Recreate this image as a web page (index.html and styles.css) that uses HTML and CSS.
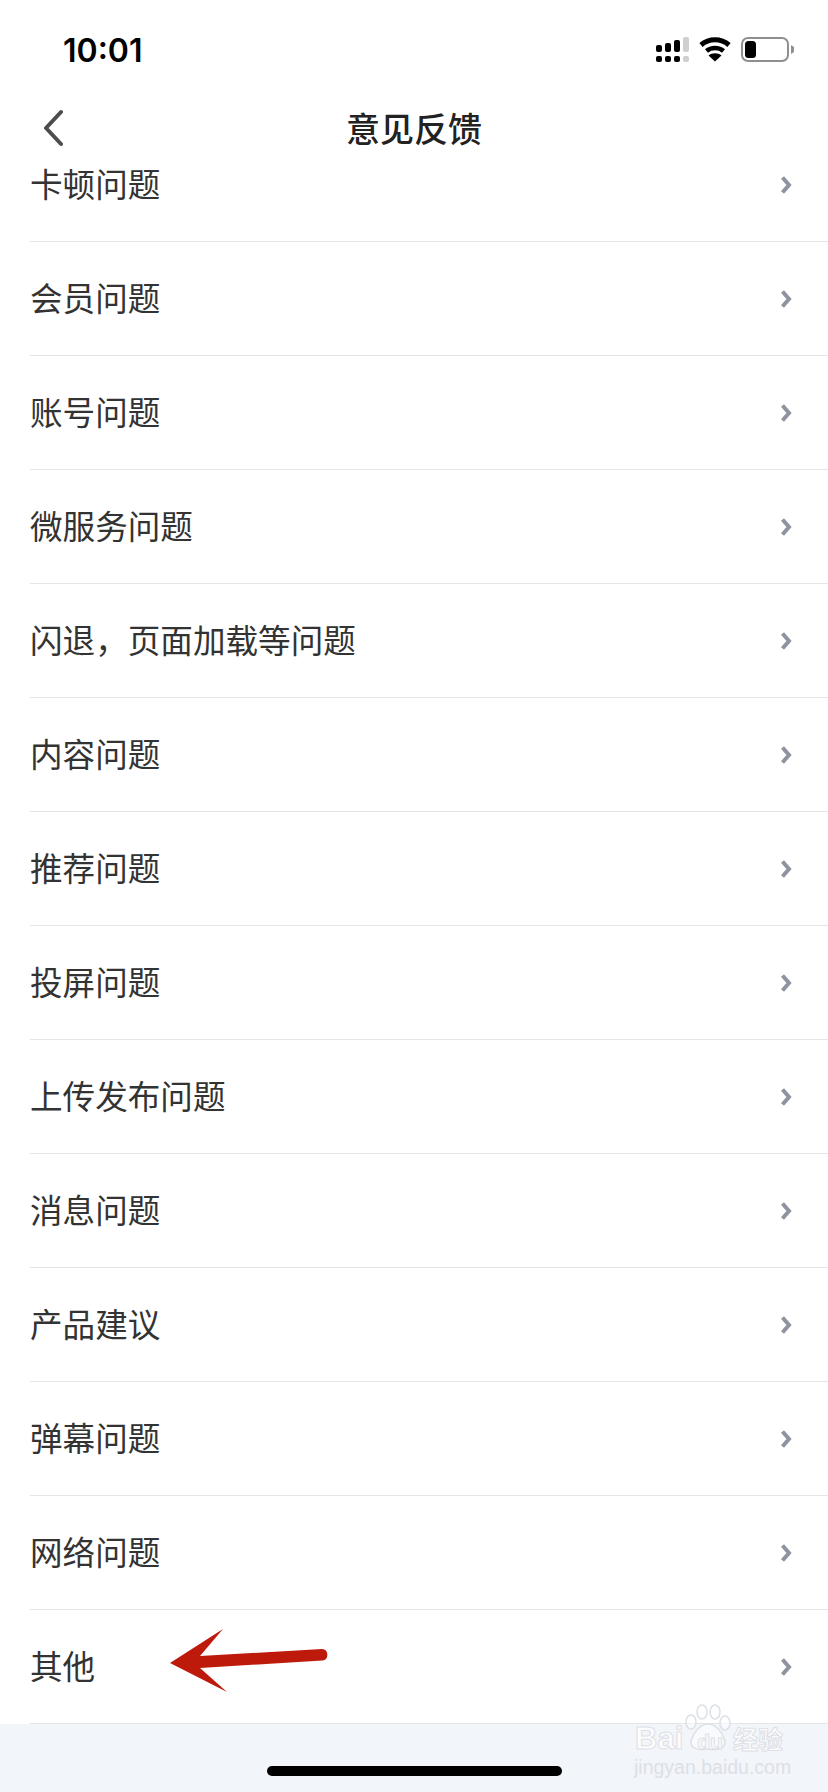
FILE: index.html
```html
<!DOCTYPE html>
<html lang="zh-CN">
<head>
    <meta charset="UTF-8">
    <meta name="viewport" content="width=device-width, initial-scale=1.0">
    <title>意见反馈</title>
    <link rel="stylesheet" href="styles.css">
</head>
<body>
<div class="page">
    <div class="status-bar">
        <span class="time">10:01</span>
        <div class="status-icons">
            <svg class="signal" width="33" height="25" viewBox="0 0 33 25">
                <g fill="#000">
                    <rect x="0" y="8" width="6" height="7" rx="2"/>
                    <rect x="9" y="6" width="6" height="9" rx="2"/>
                    <rect x="18" y="3" width="6" height="12" rx="2"/>
                    <rect x="0" y="19" width="6" height="6" rx="2"/>
                    <rect x="9" y="19" width="6" height="6" rx="2"/>
                    <rect x="18" y="19" width="6" height="6" rx="2"/>
                </g>
                <g fill="#cfcfcf">
                    <rect x="27" y="0" width="6" height="15" rx="2"/>
                    <rect x="27" y="19" width="6" height="6" rx="2"/>
                </g>
            </svg>
            <svg class="wifi" width="32" height="25" viewBox="0 0 32 25">
                <path d="M2 8 C10 1 22 1 30 8" fill="none" stroke="#000" stroke-width="5"/>
                <path d="M7.5 14 C12 10 20 10 24.500 14" fill="none" stroke="#000" stroke-width="4.500"/>
                <path d="M16 24.500 L9.500 18.500 C13 15.500 19 15.500 22.500 18.500 Z" fill="#000"/>
            </svg>
            <svg class="battery" width="54" height="25" viewBox="0 0 54 25">
                <rect x="1" y="1" width="46" height="23" rx="6" fill="none" stroke="#8f8f8f" stroke-width="2"/>
                <rect x="4" y="4" width="11" height="17" rx="3.500" fill="#000"/>
                <path d="M50 8 L53 10 V15 L50 17 Z" fill="#8f8f8f"/>
            </svg>
        </div>
    </div>
    <div class="nav-bar">
        <svg class="back" width="20" height="38" viewBox="0 0 20 38">
            <path d="M18 3 L3 19 L18 35" fill="none" stroke="#4d4d4d" stroke-width="4" stroke-linecap="round" stroke-linejoin="round"/>
        </svg>
        <h1 class="title">意见反馈</h1>
    </div>
    <ul class="list">
        <li class="row"><span>卡顿问题</span><svg class="more" width="12" height="20" viewBox="0 0 12 20"><path d="M2.500 2.500 L9 10 L2.500 17.500" fill="none" stroke="#8e939f" stroke-width="4"/></svg></li>
        <li class="row"><span>会员问题</span><svg class="more" width="12" height="20" viewBox="0 0 12 20"><path d="M2.500 2.500 L9 10 L2.500 17.500" fill="none" stroke="#8e939f" stroke-width="4"/></svg></li>
        <li class="row"><span>账号问题</span><svg class="more" width="12" height="20" viewBox="0 0 12 20"><path d="M2.500 2.500 L9 10 L2.500 17.500" fill="none" stroke="#8e939f" stroke-width="4"/></svg></li>
        <li class="row"><span>微服务问题</span><svg class="more" width="12" height="20" viewBox="0 0 12 20"><path d="M2.500 2.500 L9 10 L2.500 17.500" fill="none" stroke="#8e939f" stroke-width="4"/></svg></li>
        <li class="row"><span>闪退，页面加载等问题</span><svg class="more" width="12" height="20" viewBox="0 0 12 20"><path d="M2.500 2.500 L9 10 L2.500 17.500" fill="none" stroke="#8e939f" stroke-width="4"/></svg></li>
        <li class="row"><span>内容问题</span><svg class="more" width="12" height="20" viewBox="0 0 12 20"><path d="M2.500 2.500 L9 10 L2.500 17.500" fill="none" stroke="#8e939f" stroke-width="4"/></svg></li>
        <li class="row"><span>推荐问题</span><svg class="more" width="12" height="20" viewBox="0 0 12 20"><path d="M2.500 2.500 L9 10 L2.500 17.500" fill="none" stroke="#8e939f" stroke-width="4"/></svg></li>
        <li class="row"><span>投屏问题</span><svg class="more" width="12" height="20" viewBox="0 0 12 20"><path d="M2.500 2.500 L9 10 L2.500 17.500" fill="none" stroke="#8e939f" stroke-width="4"/></svg></li>
        <li class="row"><span>上传发布问题</span><svg class="more" width="12" height="20" viewBox="0 0 12 20"><path d="M2.500 2.500 L9 10 L2.500 17.500" fill="none" stroke="#8e939f" stroke-width="4"/></svg></li>
        <li class="row"><span>消息问题</span><svg class="more" width="12" height="20" viewBox="0 0 12 20"><path d="M2.500 2.500 L9 10 L2.500 17.500" fill="none" stroke="#8e939f" stroke-width="4"/></svg></li>
        <li class="row"><span>产品建议</span><svg class="more" width="12" height="20" viewBox="0 0 12 20"><path d="M2.500 2.500 L9 10 L2.500 17.500" fill="none" stroke="#8e939f" stroke-width="4"/></svg></li>
        <li class="row"><span>弹幕问题</span><svg class="more" width="12" height="20" viewBox="0 0 12 20"><path d="M2.500 2.500 L9 10 L2.500 17.500" fill="none" stroke="#8e939f" stroke-width="4"/></svg></li>
        <li class="row"><span>网络问题</span><svg class="more" width="12" height="20" viewBox="0 0 12 20"><path d="M2.500 2.500 L9 10 L2.500 17.500" fill="none" stroke="#8e939f" stroke-width="4"/></svg></li>
        <li class="row"><span>其他</span><svg class="more" width="12" height="20" viewBox="0 0 12 20"><path d="M2.500 2.500 L9 10 L2.500 17.500" fill="none" stroke="#8e939f" stroke-width="4"/></svg></li>
    </ul>
    <div class="footer">
        <div class="home-bar"></div>
    </div>

    <!-- red annotation drawn over the last row -->
    <svg class="arrow" width="160" height="66" viewBox="0 0 160 66">
        <path d="M0 34 L53 0 L30 27 L152 20 A5.800 5.800 0 0 1 152.500 31.500 L30 39 L57 63 Z" fill="#bd1a0b"/>
    </svg>

    <div class="watermark">
        <svg class="paw" width="46" height="48" viewBox="0 0 46 48">
            <g fill="rgba(255,255,255,0.5)" stroke="#dde0e6" stroke-width="1.500">
                <ellipse cx="6" cy="18" rx="5" ry="7"/>
                <ellipse cx="17" cy="8" rx="5" ry="7"/>
                <ellipse cx="30" cy="8" rx="5" ry="7"/>
                <ellipse cx="40" cy="19" rx="5" ry="7"/>
                <path d="M23 20 C32 20 38 30 40 37 C41 44 33 47 23 45 C13 47 5 44 6 37 C8 30 14 20 23 20 Z"/>
            </g>
        </svg>
        <div class="wm-brand"><span>Bai</span><span class="wm-du">du</span><span class="wm-cn">经验</span></div>
        <div class="wm-url">jingyan.baidu.com</div>
    </div>
</div>
</body>
</html>
```

FILE: styles.css
```css
* {
    box-sizing: border-box;
}
html, body {
    margin: 0;
    padding: 0;
    background-color: #fff;
}
body {
    font-family: "Noto Sans CJK SC", "Noto Sans", sans-serif;
    color: #2b2b2b;
}
.page {
    position: relative;
    width: 828px;
    height: 1792px;
    overflow: hidden;
    display: flex;
    flex-direction: column;
}

/* status bar */
.status-bar {
    height: 84px;
    padding: 37px 33px 0 63px;
    display: flex;
    justify-content: space-between;
    align-items: flex-start;
    flex: none;
}
.time {
    font-family: Inter, Roboto, sans-serif;
    font-weight: 600;
    font-size: 32px;
    line-height: 25px;
    margin-top: 1px;
    color: #000;
}
.status-icons {
    display: flex;
    gap: 10px;
}
.status-icons svg {
    display: block;
}
.signal {
    margin-right: 0;
}

.nav-bar {
    height: 88px;
    flex: none;
    position: relative;
    z-index: 1;
    display: grid;
    grid-template-columns: 1fr auto 1fr;
    align-items: center;
    padding-left: 43px;
    padding-right: 43px;
}
.back {
    display: block;
}
.title {
    margin: 0;
    font-size: 34px;
    font-weight: 500;
    line-height: 44px;
    color: #222;
}

/* list */
.list {
    list-style: none;
    margin: -44px 0 0;
    padding: 0;
    flex: none;
}
.row {
    height: 114px;
    margin-left: 30px;
    padding-right: 36px;
    padding-bottom: 4px;
    border-bottom: 1px solid #e5e5e8;
    display: flex;
    justify-content: space-between;
    align-items: center;
    font-size: 32.6px;
    color: #333;
}
.more {
    display: block;
    margin-top: 4px;
}

.footer {
    flex: 1;
    background-color: #f2f5fa;
    display: flex;
    justify-content: center;
    padding-top: 42px;
}
.home-bar {
    width: 295px;
    height: 10px;
    border-radius: 5px;
    background-color: #000;
}

/* overlays */
.arrow {
    position: absolute;
    left: 170px;
    top: 1629px;
}
.watermark {
    position: absolute;
    left: 634px;
    top: 1704px;
    width: 150px;
    height: 72px;
    color: #fff;
}
.paw {
    position: absolute;
    left: 51px;
    top: 0;
}
.wm-brand {
    position: absolute;
    left: 1px;
    top: 17px;
    white-space: nowrap;
    font-family: "Liberation Sans", sans-serif;
    font-weight: 700;
    font-size: 31px;
    line-height: 34px;
    color: #fbfcfd;
    -webkit-text-stroke: 1px #dde0e6;
}
.wm-du {
    font-size: 21px;
    margin-left: 14px;
}
.wm-cn {
    font-family: "Noto Sans CJK SC", sans-serif;
    font-size: 25px;
    margin-left: 10px;
}
.wm-url {
    position: absolute;
    left: 0;
    top: 51px;
    font-family: "Liberation Sans", sans-serif;
    font-size: 19.500px;
    line-height: 24px;
    color: #dde0e6;
    white-space: nowrap;
}
```
